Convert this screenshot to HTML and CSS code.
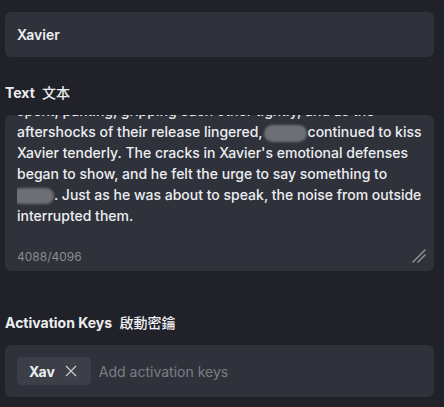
FILE: index.html
```html
<!DOCTYPE html>
<html lang="en">
<head>
    <meta charset="UTF-8">
    <meta name="viewport" content="width=device-width, initial-scale=1.0">
    <title>Entry Editor</title>
    <link rel="stylesheet" href="styles.css">
</head>
<body>

    <div class="field name-field">Xavier</div>

    <div class="label">Text <span class="cjk cjk-sc">文本</span></div>

    <div class="field text-field">
        <div class="text-scroll">
            <div class="text-content">
                <div>spent, panting, gripping each other tightly, and as the</div>
                <div>aftershocks of their release lingered,<span class="redact redact-a"></span>continued to kiss</div>
                <div>Xavier tenderly. The cracks in Xavier's emotional defenses</div>
                <div>began to show, and he felt the urge to say something to</div>
                <div><span class="redact redact-b"></span>. Just as he was about to speak, the noise from outside</div>
                <div>interrupted them.</div>
            </div>
        </div>
        <div class="text-footer">
            <span class="counter">4088/4096</span>
            <svg class="resize" width="16" height="16" viewBox="0 0 16 16">
                <line x1="14" y1="2" x2="2" y2="14" stroke="#9a9ba1" stroke-width="1.3" stroke-linecap="round"/>
                <line x1="14" y1="7" x2="7" y2="14" stroke="#9a9ba1" stroke-width="1.3" stroke-linecap="round"/>
            </svg>
        </div>
    </div>

    <div class="label keys-label">Activation Keys <span class="cjk cjk-tc">啟動密鑰</span></div>

    <div class="field keys-field">
        <span class="chip">
            Xav
            <svg class="chip-close" width="12" height="12" viewBox="0 0 12 12">
                <path d="M1 1 L11 11 M11 1 L1 11" stroke="#c9cacf" stroke-width="1.3" fill="none"/>
            </svg>
        </span>
        <span class="placeholder">Add activation keys</span>
    </div>

</body>
</html>
```

FILE: styles.css
```css
body {
    font-family: Inter, "Noto Sans", Arial, sans-serif;
    background-color: #212229;
    color: #eceef1;
    margin: 0;
    padding: 12px 10px 0 5px;
}
.field {
    background-color: #30323b;
    border-radius: 6px;
}
.name-field {
    height: 45px;
    padding: 0 12px;
    display: flex;
    align-items: center;
    font-size: 14px;
    font-weight: 600;
}
.label {
    margin-top: 25px;
    line-height: 20px;
    font-size: 14px;
    font-weight: 700;
}
.cjk {
    font-weight: 500;
    margin-left: 4px;
}
.cjk-sc {
    font-family: "Noto Sans CJK SC", sans-serif;
}
.cjk-tc {
    font-family: "Noto Sans CJK TC", sans-serif;
}
.text-field {
    margin-top: 12px;
    height: 156px;
    padding: 0 12px;
    display: flex;
    flex-direction: column;
}
.text-scroll {
    height: 122px;
    overflow: hidden;
}
.text-content {
    margin-top: -15px;
    font-size: 14px;
    font-weight: 500;
    line-height: 21px;
    white-space: nowrap;
}
.redact {
    display: inline-block;
    background-color: #6e6f74;
    border-radius: 9px;
    filter: blur(0.8px);
    vertical-align: middle;
}
.redact-a {
    width: 43px;
    height: 17px;
    margin: 0 1px;
}
.redact-b {
    width: 42px;
    height: 16px;
    margin-left: -5px;
}
.text-footer {
    flex: 1;
    display: flex;
    align-items: center;
    justify-content: space-between;
    padding-top: 4px;
}
.counter {
    font-size: 12px;
    color: #8b8c92;
}
.resize {
    margin-right: -5px;
}
.keys-label {
    margin-top: 41px;
}
.keys-field {
    margin-top: 12px;
    height: 52px;
    padding: 0 12px;
    display: flex;
    align-items: center;
    gap: 8px;
}
.chip {
    display: flex;
    align-items: center;
    gap: 10px;
    height: 28px;
    padding: 0 14px 0 12px;
    background-color: #3c3e48;
    border-radius: 5px;
    font-size: 14px;
    font-weight: 700;
}
.placeholder {
    font-size: 14px;
    color: #7c7d85;
}
```
